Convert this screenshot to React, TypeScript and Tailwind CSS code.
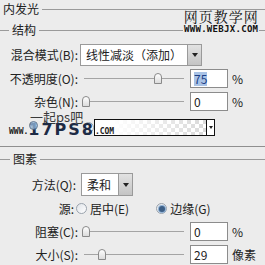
function GroupTitle({ label, lead }: { label: string; lead: number }) {
  return (
    <div className="flex items-center">
      {lead > 0 && <div className="border-t border-[#9a9a9a]" style={{ width: lead }} />}
      <span className="px-[3px] leading-[16px]">{label}</span>
      <div className="flex-1 border-t border-[#9a9a9a]" />
    </div>
  );
}

function Thumb({ left }: { left: number }) {
  return (
    <div
      className="absolute top-[5px] h-[11px] w-[8px] rounded-t-[4px] border border-[#8a8a8a] bg-gradient-to-b from-white to-[#dcdcdc]"
      style={{ left }}
    />
  );
}

function SliderRow({
  label,
  value,
  unit,
  thumb,
  selected,
}: {
  label: string;
  value: string;
  unit: string;
  thumb: number;
  selected?: boolean;
}) {
  return (
    <div className="flex h-[23px] items-center">
      <div className="w-[78px] text-right leading-[14px]">{label}</div>
      <div className="relative ml-[4px] h-[21px] w-[102px]">
        <div className="absolute left-[2px] right-0 top-[10px] h-px bg-[#a4a4a4]" />
        <Thumb left={thumb} />
      </div>
      <div className="ml-[6px] flex h-[19px] w-[38px] items-center border border-[#8c8c8c] bg-white pl-[3px]">
        <span className={selected ? "bg-[#a9c3e6] leading-[14px] text-[#1b3f86]" : "leading-[14px]"}>{value}</span>
      </div>
      <span className="ml-[4px]">{unit}</span>
    </div>
  );
}

function DropButton({ h }: { h: number }) {
  return (
    <div
      className="flex w-[14px] items-center justify-center border border-l-0 border-[#9a9a9a] bg-gradient-to-b from-[#e2e2e2] to-[#c4c4c4]"
      style={{ height: h }}
    >
      <div className="h-0 w-0 border-x-[3px] border-t-[4px] border-x-transparent border-t-[#222]" />
    </div>
  );
}

function Radio({ checked }: { checked?: boolean }) {
  return (
    <div className="flex h-[11px] w-[11px] items-center justify-center rounded-full border border-[#9aa3ad] bg-gradient-to-br from-[#dfe3e8] to-white">
      {checked && <div className="h-[6px] w-[6px] rounded-full bg-[#3d5f86] ring-1 ring-[#8fb0d4]" />}
    </div>
  );
}

export default function App() {
  return (
    <div className="relative h-[265px] w-[265px] overflow-hidden bg-[#ececec] font-['Noto_Sans_CJK_SC','Liberation_Sans',sans-serif] text-[12px] text-[#222]">
      <div className="pt-[1px]">
        <GroupTitle label="内发光" lead={0} />
      </div>
      <div className="mt-[5px]">
        <GroupTitle label="结构" lead={9} />
      </div>

      <div className="mt-[6px] flex h-[22px] items-center">
        <div className="w-[78px] text-right">混合模式(B):</div>
        <div className="ml-[2px] flex h-[22px] w-[108px] items-center border border-[#9a9a9a] bg-white pl-[5px]">
          线性减淡（添加）
        </div>
        <DropButton h={22} />
      </div>

      <div className="mt-[1px]">
        <SliderRow label="不透明度(O):" value="75" unit="%" thumb={72} selected />
        <SliderRow label="杂色(N):" value="0" unit="%" thumb={0} />
      </div>

      <div className="mt-[6px] flex h-[17px] items-center">
        <div className="ml-[83px]">
          <Radio />
        </div>
        <div className="h-[17px] w-[113px] border border-[#111] bg-[linear-gradient(to_right,#ffffff_15%,rgba(255,255,255,0)),repeating-conic-gradient(#d9d9d9_0_25%,#ffffff_0_50%)] bg-[length:auto,8px_8px]" />
        <div className="flex h-[17px] w-[8px] items-center justify-center border border-l-0 border-[#111] bg-white">
          <div className="h-0 w-0 border-x-[2px] border-t-[3px] border-x-transparent border-t-[#222]" />
        </div>
      </div>

      <div className="mt-[10px] border-t border-[#8f8f8f]" />
      <div className="mt-[4px]">
        <GroupTitle label="图素" lead={10} />
      </div>

      <div className="mt-[6px] flex h-[23px] items-center">
        <div className="w-[76px] text-right">方法(Q):</div>
        <div className="ml-[5px] flex h-[23px] w-[38px] items-center border border-[#9a9a9a] bg-white pl-[5px]">柔和</div>
        <DropButton h={23} />
      </div>

      <div className="mt-[1px] flex h-[23px] items-center">
        <div className="w-[74px] text-right">源:</div>
        <div className="ml-[2px]">
          <Radio />
        </div>
        <span className="ml-[3px]">居中(E)</span>
        <div className="ml-[27px]">
          <Radio checked />
        </div>
        <span className="ml-[3px]">边缘(G)</span>
      </div>

      <SliderRow label="阻塞(C):" value="0" unit="%" thumb={0} />
      <SliderRow label="大小(S):" value="29" unit="像素" thumb={16} />

      <div className="absolute left-[183px] top-[9px] flex flex-col items-center gap-[2px]">
        <span className="font-['Noto_Serif_CJK_SC','Noto_Sans_CJK_SC',serif] text-[14px] leading-[14px] tracking-[1px] text-[#111]">网页教学网</span>
        <span className="bg-[#ececec] px-[1px] font-['DejaVu_Sans_Mono',monospace] text-[9px] font-bold leading-[9px] tracking-[0.3px] text-[#111]">WWW.WEBJX.COM</span>
      </div>

      <div className="absolute left-[9px] top-[111px] flex flex-col gap-[1px]">
        <span className="ml-[21px] text-[13px] leading-[12px] text-[#3a3a3a]">一起ps吧</span>
        <div className="flex items-end">
          <span className="font-['DejaVu_Sans_Mono',monospace] text-[8px] font-bold leading-[9px] text-[#222]">WWW.</span>
          <span className="font-['DejaVu_Sans',sans-serif] text-[16px] font-bold leading-[12px] tracking-[2px] text-[#1d2b45]">17PS8</span>
          <span className="font-['DejaVu_Sans_Mono',monospace] text-[8px] font-bold leading-[9px] text-[#222]">.COM</span>
        </div>
        <div className="absolute left-[20px] top-[10px] h-[9px] w-[9px] rounded-full border border-[#48617e] bg-[#8fb3d6] opacity-80" />
      </div>
    </div>
  );
}
